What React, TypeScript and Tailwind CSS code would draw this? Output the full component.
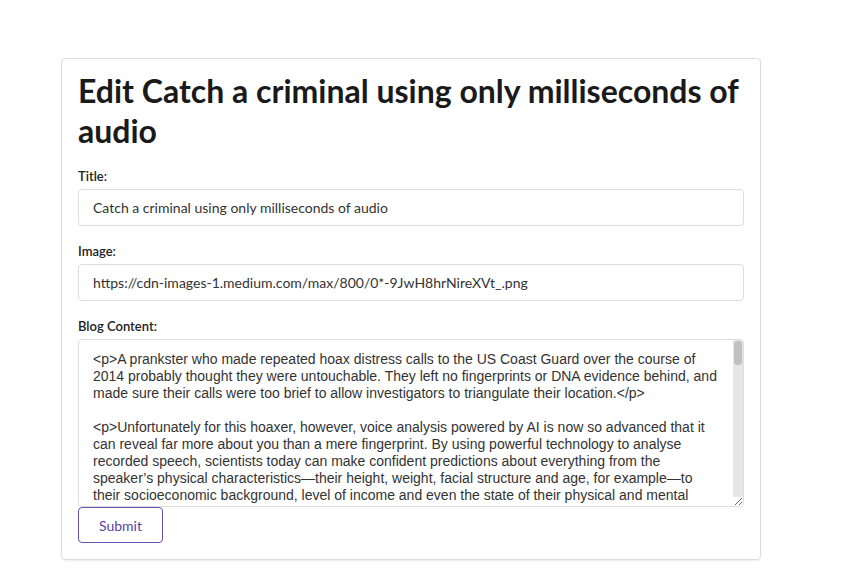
const content = `<p>A prankster who made repeated hoax distress calls to the US Coast Guard over the course of 2014 probably thought they were untouchable. They left no fingerprints or DNA evidence behind, and made sure their calls were too brief to allow investigators to triangulate their location.</p>

<p>Unfortunately for this hoaxer, however, voice analysis powered by AI is now so advanced that it can reveal far more about you than a mere fingerprint. By using powerful technology to analyse recorded speech, scientists today can make confident predictions about everything from the speaker’s physical characteristics—their height, weight, facial structure and age, for example—to their socioeconomic background, level of income and even the state of their physical and mental health.</p>

<p>For instance, a team of scientists has shown that it is possible to reconstruct a rough image of a speaker’s face from their voice alone. Others have trained systems to predict what a person looks like, how old they are and where they grew up.</p>

<p>The technology is not perfect, but it is improving quickly, and it raises serious questions about privacy.</p>`;

export default function App() {
  return (
    <div className="min-h-[583px] bg-white pt-[58px] font-['Lato',sans-serif] text-[#222]">
      <div className="ml-[61px] w-[700px] rounded border border-[#ddd] px-4 pt-3 pb-4 shadow-[0_1px_2px_rgba(0,0,0,0.08)]">
        <h1 className="mb-[15px] text-[32px] font-bold leading-10 text-[#1a1a1a]">
          Edit Catch a criminal using only milliseconds of audio
        </h1>
        <form className="flex flex-col">
          <label className="mb-[3px] text-[13px] leading-[20px] font-semibold text-[#222]">Title:</label>
          <input
            className="mb-[15px] h-[37px] w-[666px] rounded border border-[#dedede] px-[14px] text-[14px] text-[#333] outline-none"
            defaultValue="Catch a criminal using only milliseconds of audio"
          />
          <label className="mb-[3px] text-[13px] leading-[20px] font-semibold text-[#222]">Image:</label>
          <input
            className="mb-[15px] h-[37px] w-[666px] rounded border border-[#dedede] px-[14px] text-[14px] text-[#333] outline-none"
            defaultValue="https://cdn-images-1.medium.com/max/800/0*-9JwH8hrNireXVt_.png"
          />
          <label className="mb-[3px] text-[13px] leading-[20px] font-semibold text-[#222]">Blog Content:</label>
          <div className="relative w-[666px]">
            <textarea
              className="block h-[168px] w-[666px] resize-y rounded-sm border border-[#dedede] pt-[11px] pr-[24px] pl-[14px] font-['Liberation_Sans',Arial,sans-serif] text-[14px] leading-[17px] text-[#333] outline-none"
              defaultValue={content}
            />
            {/* fake scrollbar (headless browser hides the native one) */}
            <div className="pointer-events-none absolute top-[1px] right-[1px] bottom-[10px] w-[10px] bg-[#e6e6e6]">
              <div className="mx-auto mt-[1px] h-[24px] w-[8px] rounded-[3px] bg-[#c1c1c1]" />
            </div>
          </div>
          <div>
            <button
              type="button"
              className="h-[36px] w-[85px] rounded border border-[#6a4fb0] bg-white text-[14px] text-[#5a3fa6]"
            >
              Submit
            </button>
          </div>
        </form>
      </div>
    </div>
  );
}
